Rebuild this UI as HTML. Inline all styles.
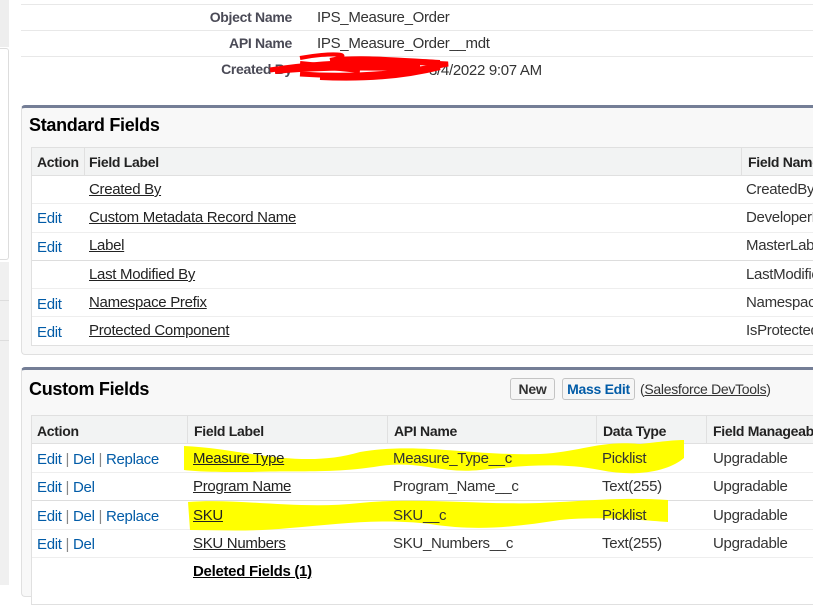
<!DOCTYPE html>
<html><head><meta charset="utf-8"><style>
*{margin:0;padding:0;box-sizing:border-box}
body{width:813px;height:585px;overflow:hidden;background:#fff;font-family:"Liberation Sans",Arial,sans-serif;font-size:15px;color:#333;position:relative;letter-spacing:-0.3px}
.a{position:absolute;white-space:nowrap}
.lbl{font-weight:bold;color:#4a4a56;font-size:14px;text-align:right}
.panel{position:absolute;left:21px;right:0;background:#f8f8f8;border:1px solid #e0e0e0;border-right:none;border-top:3px solid #747e96;border-radius:4px 0 0 4px}
.tbl{position:absolute;left:31px;right:0;background:#fff;border:1px solid #e0e0e0;border-right:none}
.th{position:absolute;background:#f2f3f3;font-weight:bold;font-size:14px;color:#222;border-bottom:1px solid #e0e0e0;white-space:nowrap;overflow:hidden}
.u{text-decoration:underline;color:#222}
.e{color:#015ba7}
.sep{color:#888}
.h2{font-weight:bold;font-size:18px;color:#000}
</style></head><body>
<div class="a" style="left:0;top:0;width:9px;height:47px;background:#eee"></div>
<div class="a" style="left:0;top:48px;width:9px;height:212px;border:1px solid #ddd;border-left:none;border-radius:0 3px 3px 0;background:#fff"></div>
<div class="a" style="left:0;top:262px;width:9px;height:323px;background:#f0f0f0"></div>
<div class="a" style="left:0;top:300px;width:9px;height:1px;background:#ddd"></div>
<div class="a" style="left:0;top:340px;width:9px;height:1px;background:#ddd"></div>

<div class="a" style="left:21px;right:0;top:4px;height:1px;background:#e8e8e8"></div>
<div class="a" style="left:21px;right:0;top:30px;height:1px;background:#e8e8e8"></div>
<div class="a" style="left:21px;right:0;top:56px;height:1px;background:#e8e8e8"></div>
<div class="a lbl" style="left:150px;width:142px;top:9px">Object Name</div>
<div class="a lbl" style="left:150px;width:142px;top:35px">API Name</div>
<div class="a lbl" style="left:150px;width:142px;top:61px">Created By</div>
<div class="a" style="left:317px;top:9px">IPS_Measure_Order</div>
<div class="a" style="left:317px;top:35px">IPS_Measure_Order__mdt</div>
<div class="a" style="left:429px;top:62px">3/4/2022 9:07 AM</div>
<svg class="a" style="left:0;top:0" width="813" height="100"><g stroke="#f00" fill="none"><path d="M270 70 C320 62 380 60 448 64 C410 72 360 78 300 74" stroke-width="5"/><path d="M300 58 C330 52 360 54 330 60 C360 56 400 60 440 62" stroke-width="4"/><path d="M275 72 C330 66 390 70 440 68 C400 78 360 80 320 78" stroke-width="4"/><path d="M340 66 L420 66 M300 64 L360 70" stroke-width="6"/></g></svg>

<div class="panel" style="top:105px;height:250px"></div>
<div class="a h2" style="left:29px;top:115px">Standard Fields</div>
<div class="tbl" style="top:147px;height:199px"></div>
<div class="th" style="left:32px;top:148px;width:52px;height:28px;padding:6px 0 0 5px">Action</div>
<div class="th" style="left:85px;top:148px;width:656px;height:28px;padding:6px 0 0 4px">Field Label</div>
<div class="th" style="left:742px;top:148px;width:80px;height:28px;padding:6px 0 0 6px">Field Name</div>
<div class="a" style="left:84px;top:148px;width:1px;height:28px;background:#e0e0e0"></div>
<div class="a" style="left:741px;top:148px;width:1px;height:28px;background:#e0e0e0"></div>
<div class="a" style="left:32px;right:0;top:203px;height:1px;background:#eee"></div>
<div class="a" style="left:32px;right:0;top:232px;height:1px;background:#eee"></div>
<div class="a" style="left:32px;right:0;top:260px;height:1px;background:#ddd"></div>
<div class="a" style="left:32px;right:0;top:288px;height:1px;background:#eee"></div>
<div class="a" style="left:32px;right:0;top:316px;height:1px;background:#eee"></div>

<div class="a u" style="left:89px;top:181px">Created By</div><div class="a" style="left:746px;top:181px">CreatedBy</div>
<div class="a e" style="left:37px;top:210px">Edit</div><div class="a u" style="left:89px;top:209px">Custom Metadata Record Name</div><div class="a" style="left:746px;top:209px">DeveloperName</div>
<div class="a e" style="left:37px;top:239px">Edit</div><div class="a u" style="left:89px;top:237px">Label</div><div class="a" style="left:746px;top:237px">MasterLabel</div>
<div class="a u" style="left:89px;top:266px">Last Modified By</div><div class="a" style="left:746px;top:266px">LastModifiedBy</div>
<div class="a e" style="left:37px;top:296px">Edit</div><div class="a u" style="left:89px;top:294px">Namespace Prefix</div><div class="a" style="left:746px;top:294px">NamespacePrefix</div>
<div class="a e" style="left:37px;top:324px">Edit</div><div class="a u" style="left:89px;top:322px">Protected Component</div><div class="a" style="left:746px;top:322px">IsProtected</div>

<div class="panel" style="top:367px;height:230px"></div>
<div class="a h2" style="left:29px;top:379px">Custom Fields</div>
<div class="a" style="left:510px;top:378px;width:45px;height:22px;border:1px solid #c4c4c4;border-radius:3px;background:#f6f6f6;font-weight:bold;font-size:14px;color:#333;text-align:center;line-height:20px">New</div>
<div class="a" style="left:562px;top:378px;width:73px;height:22px;border:1px solid #c4c4c4;border-radius:3px;background:#f6f6f6;font-weight:bold;font-size:14px;color:#015ba7;text-align:center;line-height:20px">Mass Edit</div>
<div class="a" style="left:640px;top:381px;font-size:14px">(<span style="text-decoration:underline">Salesforce DevTools</span>)</div>

<div class="tbl" style="top:415px;height:190px"></div>
<div class="th" style="left:32px;top:416px;width:155px;height:28px;padding:7px 0 0 5px">Action</div>
<div class="th" style="left:188px;top:416px;width:199px;height:28px;padding:7px 0 0 6px">Field Label</div>
<div class="th" style="left:388px;top:416px;width:208px;height:28px;padding:7px 0 0 6px">API Name</div>
<div class="th" style="left:597px;top:416px;width:109px;height:28px;padding:7px 0 0 6px">Data Type</div>
<div class="th" style="left:707px;top:416px;width:106px;height:28px;padding:7px 0 0 6px">Field Manageability</div>
<div class="a" style="left:187px;top:416px;width:1px;height:28px;background:#e0e0e0"></div>
<div class="a" style="left:387px;top:416px;width:1px;height:28px;background:#e0e0e0"></div>
<div class="a" style="left:596px;top:416px;width:1px;height:28px;background:#e0e0e0"></div>
<div class="a" style="left:706px;top:416px;width:1px;height:28px;background:#e0e0e0"></div>
<div class="a" style="left:32px;right:0;top:472px;height:1px;background:#eee"></div>
<div class="a" style="left:32px;right:0;top:500px;height:1px;background:#ddd"></div>
<div class="a" style="left:32px;right:0;top:529px;height:1px;background:#eee"></div>
<div class="a" style="left:32px;right:0;top:557px;height:1px;background:#eee"></div>

<svg class="a" style="left:0;top:0" width="813" height="585"><path d="M184 446 C240 448 300 470 360 452 C420 442 470 456 540 454 C580 452 600 440 640 444 C660 442 672 440 684 440 L684 458 C670 470 640 478 600 470 C560 462 520 466 480 470 C440 474 420 460 380 466 C330 474 300 470 250 472 C220 472 200 472 184 470 Z" fill="#ffff00"/><path d="M188 502 C240 498 300 510 360 503 C420 497 480 505 540 503 C590 501 620 497 668 500 L668 522 C640 520 600 516 560 520 C520 526 480 532 430 524 C380 518 340 524 290 528 C250 532 220 530 190 530 Z" fill="#ffff00"/></svg>

<div class="a e" style="left:37px;top:451px">Edit <span class="sep">|</span> Del <span class="sep">|</span> Replace</div>
<div class="a u" style="left:193px;top:450px">Measure Type</div><div class="a" style="left:393px;top:450px">Measure_Type__c</div><div class="a" style="left:602px;top:450px">Picklist</div><div class="a" style="left:713px;top:450px">Upgradable</div>
<div class="a e" style="left:37px;top:479px">Edit <span class="sep">|</span> Del</div>
<div class="a u" style="left:193px;top:478px">Program Name</div><div class="a" style="left:393px;top:478px">Program_Name__c</div><div class="a" style="left:602px;top:478px">Text(255)</div><div class="a" style="left:713px;top:478px">Upgradable</div>
<div class="a e" style="left:37px;top:508px">Edit <span class="sep">|</span> Del <span class="sep">|</span> Replace</div>
<div class="a u" style="left:193px;top:507px">SKU</div><div class="a" style="left:393px;top:507px">SKU__c</div><div class="a" style="left:602px;top:507px">Picklist</div><div class="a" style="left:713px;top:507px">Upgradable</div>
<div class="a e" style="left:37px;top:536px">Edit <span class="sep">|</span> Del</div>
<div class="a u" style="left:193px;top:535px">SKU Numbers</div><div class="a" style="left:393px;top:535px">SKU_Numbers__c</div><div class="a" style="left:602px;top:535px">Text(255)</div><div class="a" style="left:713px;top:535px">Upgradable</div>
<div class="a u" style="left:193px;top:563px;font-weight:bold;color:#000">Deleted Fields (1)</div>
</body></html>
